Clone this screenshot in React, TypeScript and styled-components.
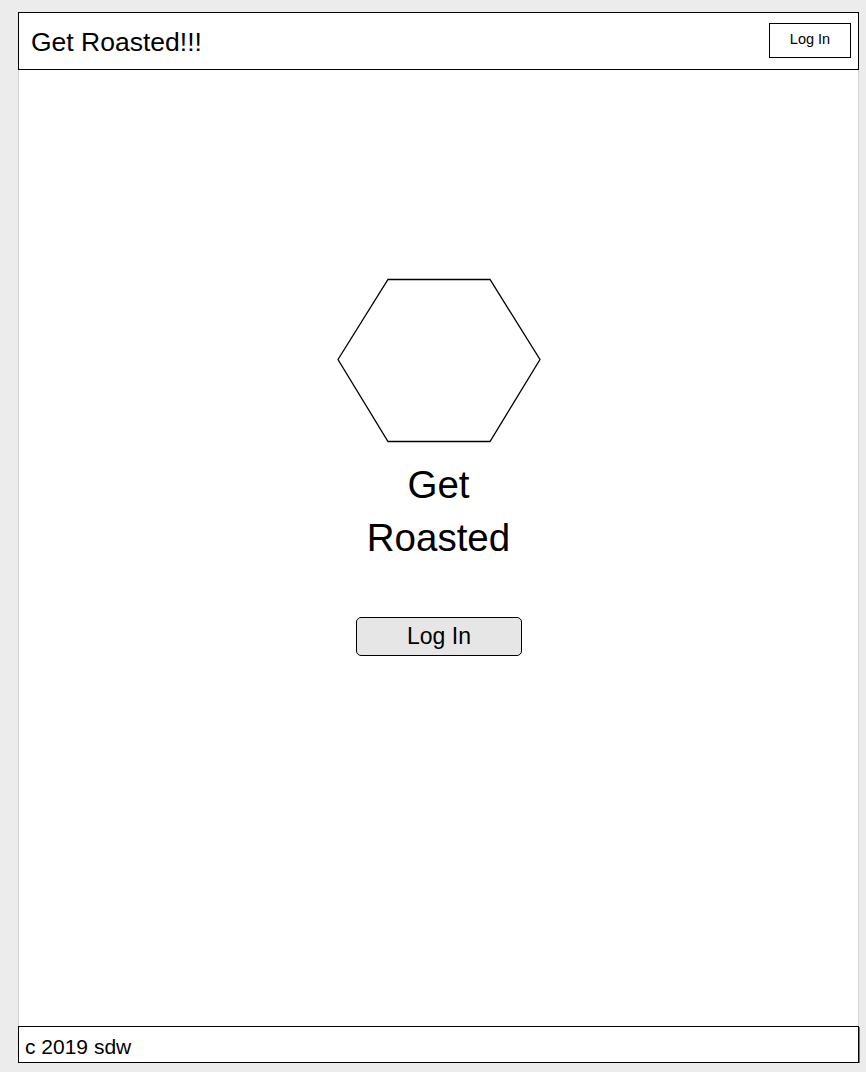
import React from "react";
import styled, { createGlobalStyle } from "styled-components";

const GlobalStyle = createGlobalStyle`
  html, body {
    margin: 0;
    padding: 0;
    background: #ececec;
    font-family: "Liberation Sans", Arial, Helvetica, sans-serif;
    color: #000;
  }
`;

const Page = styled.div`
  width: 841px;
  margin: 12px 0 0 18px;
  display: flex;
  flex-direction: column;
  height: 1051px;
  box-sizing: border-box;
`;

const Header = styled.header`
  box-sizing: border-box;
  height: 58px;
  border: 1px solid #000;
  background: #fff;
  display: flex;
  align-items: center;
  justify-content: space-between;
  padding: 0 7px 0 12px;
`;

const Brand = styled.div`
  font-size: 26.5px;
  line-height: 30px;
  padding-top: 1px;
`;

const HeaderButton = styled.button`
  box-sizing: border-box;
  width: 82px;
  height: 35px;
  border: 1px solid #000;
  background: #fff;
  font-family: inherit;
  font-size: 14.5px;
  color: #000;
  padding: 0 0 4px;
  margin-bottom: 1px;
  cursor: pointer;
`;

const Main = styled.main`
  flex: 1;
  background: #fff;
  border-left: 1px solid #d4d4d4;
  border-right: 1px solid #d4d4d4;
  display: flex;
  flex-direction: column;
  align-items: center;
  padding-top: 208px;
  box-sizing: border-box;
`;

const Hexagon = styled.svg`
  display: block;
  width: 204px;
  height: 165px;
  margin-left: 1px;
`;

const Title = styled.h1`
  margin: 15px 0 0;
  font-weight: normal;
  font-size: 38.5px;
  line-height: 53px;
  width: 160px;
  text-align: center;
`;

const LoginButton = styled.button`
  box-sizing: border-box;
  margin-top: 53px;
  width: 166px;
  height: 39px;
  border: 1px solid #000;
  border-radius: 5px;
  background: #e6e6e6;
  font-family: inherit;
  font-size: 23px;
  color: #000;
  padding: 0;
  margin-left: 1px;
  cursor: pointer;
`;

const Footer = styled.footer`
  box-sizing: border-box;
  height: 37px;
  border: 1px solid #000;
  background: #fff;
  display: flex;
  align-items: center;
  padding: 5px 0 0 6px;
  font-size: 21px;
  box-shadow: 1px 1px 0 #777;
`;

export default function App() {
  return (
    <>
      <GlobalStyle />
      <Page>
        <Header>
          <Brand>Get Roasted!!!</Brand>
          <HeaderButton>Log In</HeaderButton>
        </Header>
        <Main>
          <Hexagon viewBox="0 0 204 165" aria-hidden="true">
            <polygon
              points="1,81.5 51,1.5 153,1.5 203,81.5 153,163.5 51,163.5"
              fill="none"
              stroke="#000"
              strokeWidth="1.3"
            />
          </Hexagon>
          <Title>Get Roasted</Title>
          <LoginButton>Log In</LoginButton>
        </Main>
        <Footer>c 2019 sdw</Footer>
      </Page>
    </>
  );
}
